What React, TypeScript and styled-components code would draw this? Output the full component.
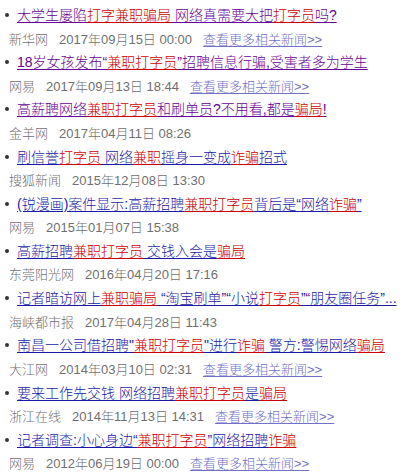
import React from 'react';
import styled, { createGlobalStyle } from 'styled-components';

interface NewsItem {
  title: string;
  source: string;
  date: string;
  visited?: boolean;
  more?: boolean;
}

const news: NewsItem[] = [
  {
    title: '大学生屡陷[打字兼职骗局] 网络真需要大把[打字员]吗?',
    source: '新华网',
    date: '2017年09月15日 00:00',
    visited: true,
    more: true,
  },
  {
    title: '18岁女孩发布“[兼职打字员]”招聘信息行骗,受害者多为学生',
    source: '网易',
    date: '2017年09月13日 18:44',
    visited: true,
    more: true,
  },
  {
    title: '高薪聘网络[兼职打字员]和刷单员?不用看,都是[骗局]!',
    source: '金羊网',
    date: '2017年04月11日 08:26',
    visited: true,
  },
  {
    title: '刷信誉[打字员] 网络[兼职]摇身一变成[诈骗]招式',
    source: '搜狐新闻',
    date: '2015年12月08日 13:30',
  },
  {
    title: '(锐漫画)案件显示:高薪招聘[兼职打字员]背后是“网络[诈骗]”',
    source: '网易',
    date: '2015年01月07日 15:38',
  },
  {
    title: '高薪招聘[兼职打字员] 交钱入会是[骗局]',
    source: '东莞阳光网',
    date: '2016年04月20日 17:16',
  },
  {
    title: '记者暗访网上[兼职骗局] “淘宝刷单”“小说[打字员]”“朋友圈任务”...',
    source: '海峡都市报',
    date: '2017年04月28日 11:43',
  },
  {
    title: '南昌一公司借招聘"[兼职打字员]"进行[诈骗] 警方:警惕网络[骗局]',
    source: '大江网',
    date: '2014年03月10日 02:31',
    more: true,
  },
  {
    title: '要来工作先交钱 网络招聘[兼职打字员]是[骗局]',
    source: '浙江在线',
    date: '2014年11月13日 14:31',
    more: true,
  },
  {
    title: '记者调查:小心身边“[兼职打字员]”网络招聘[诈骗]',
    source: '网易',
    date: '2012年06月19日 00:00',
    more: true,
  },
];

// split "abc[key]def" into plain / highlighted pieces
const splitTitle = (title: string) =>
  title
    .split(/(\[[^\]]+\])/)
    .filter(Boolean)
    .map((part) =>
      part.startsWith('[')
        ? { text: part.slice(1, -1), em: true }
        : { text: part, em: false }
    );

export default function App() {
  return (
    <>
      <GlobalStyle />
      <List>
        {news.map((item, i) => (
          <Item key={i}>
            <TitleRow>
              <Bullet />
              <TitleLink href="#" $visited={item.visited}>
                {splitTitle(item.title).map((p, j) =>
                  p.em ? <Em key={j}>{p.text}</Em> : <span key={j}>{p.text}</span>
                )}
              </TitleLink>
            </TitleRow>
            <Meta>
              <span>{item.source}</span>
              <MetaDate>{item.date}</MetaDate>
              {item.more && <MoreLink href="#">查看更多相关新闻&gt;&gt;</MoreLink>}
            </Meta>
          </Item>
        ))}
      </List>
    </>
  );
}

const GlobalStyle = createGlobalStyle`
  html, body {
    margin: 0;
    padding: 0;
    background: #fff;
  }
  body {
    font-family: "Liberation Sans", Arial, "Noto Sans CJK SC", sans-serif;
    font-weight: 300;
  }
`;

const List = styled.ul`
  list-style: none;
  margin: 0;
  padding: 3px 0 0 0;
`;

const Item = styled.li`
  margin-bottom: 1.2px;
`;

const TitleRow = styled.div`
  display: flex;
  align-items: center;
  height: 24px;
  white-space: nowrap;
  overflow: hidden;
`;

const Bullet = styled.span`
  flex: none;
  width: 4px;
  height: 4px;
  border-radius: 50%;
  background: #333;
  margin: 0 8px 0 5px;
`;

const TitleLink = styled.a<{ $visited?: boolean }>`
  font-size: 14px;
  line-height: 24px;
  color: ${({ $visited }) => ($visited ? '#660099' : '#1a1aa8')};
  text-decoration: underline;
  text-underline-offset: 2px;
`;

const Em = styled.em`
  font-style: normal;
  color: #cc0000;
  text-decoration: underline;
  text-underline-offset: 2px;
`;

const Meta = styled.div`
  display: flex;
  align-items: center;
  height: 22px;
  padding-left: 9px;
  font-size: 13px;
  color: #6f6f6f;
  white-space: nowrap;
`;

const MetaDate = styled.span`
  margin-left: 11px;
`;

const MoreLink = styled.a`
  margin-left: 11px;
  color: #7171c8;
  text-decoration: underline;
  text-underline-offset: 2px;
`;
